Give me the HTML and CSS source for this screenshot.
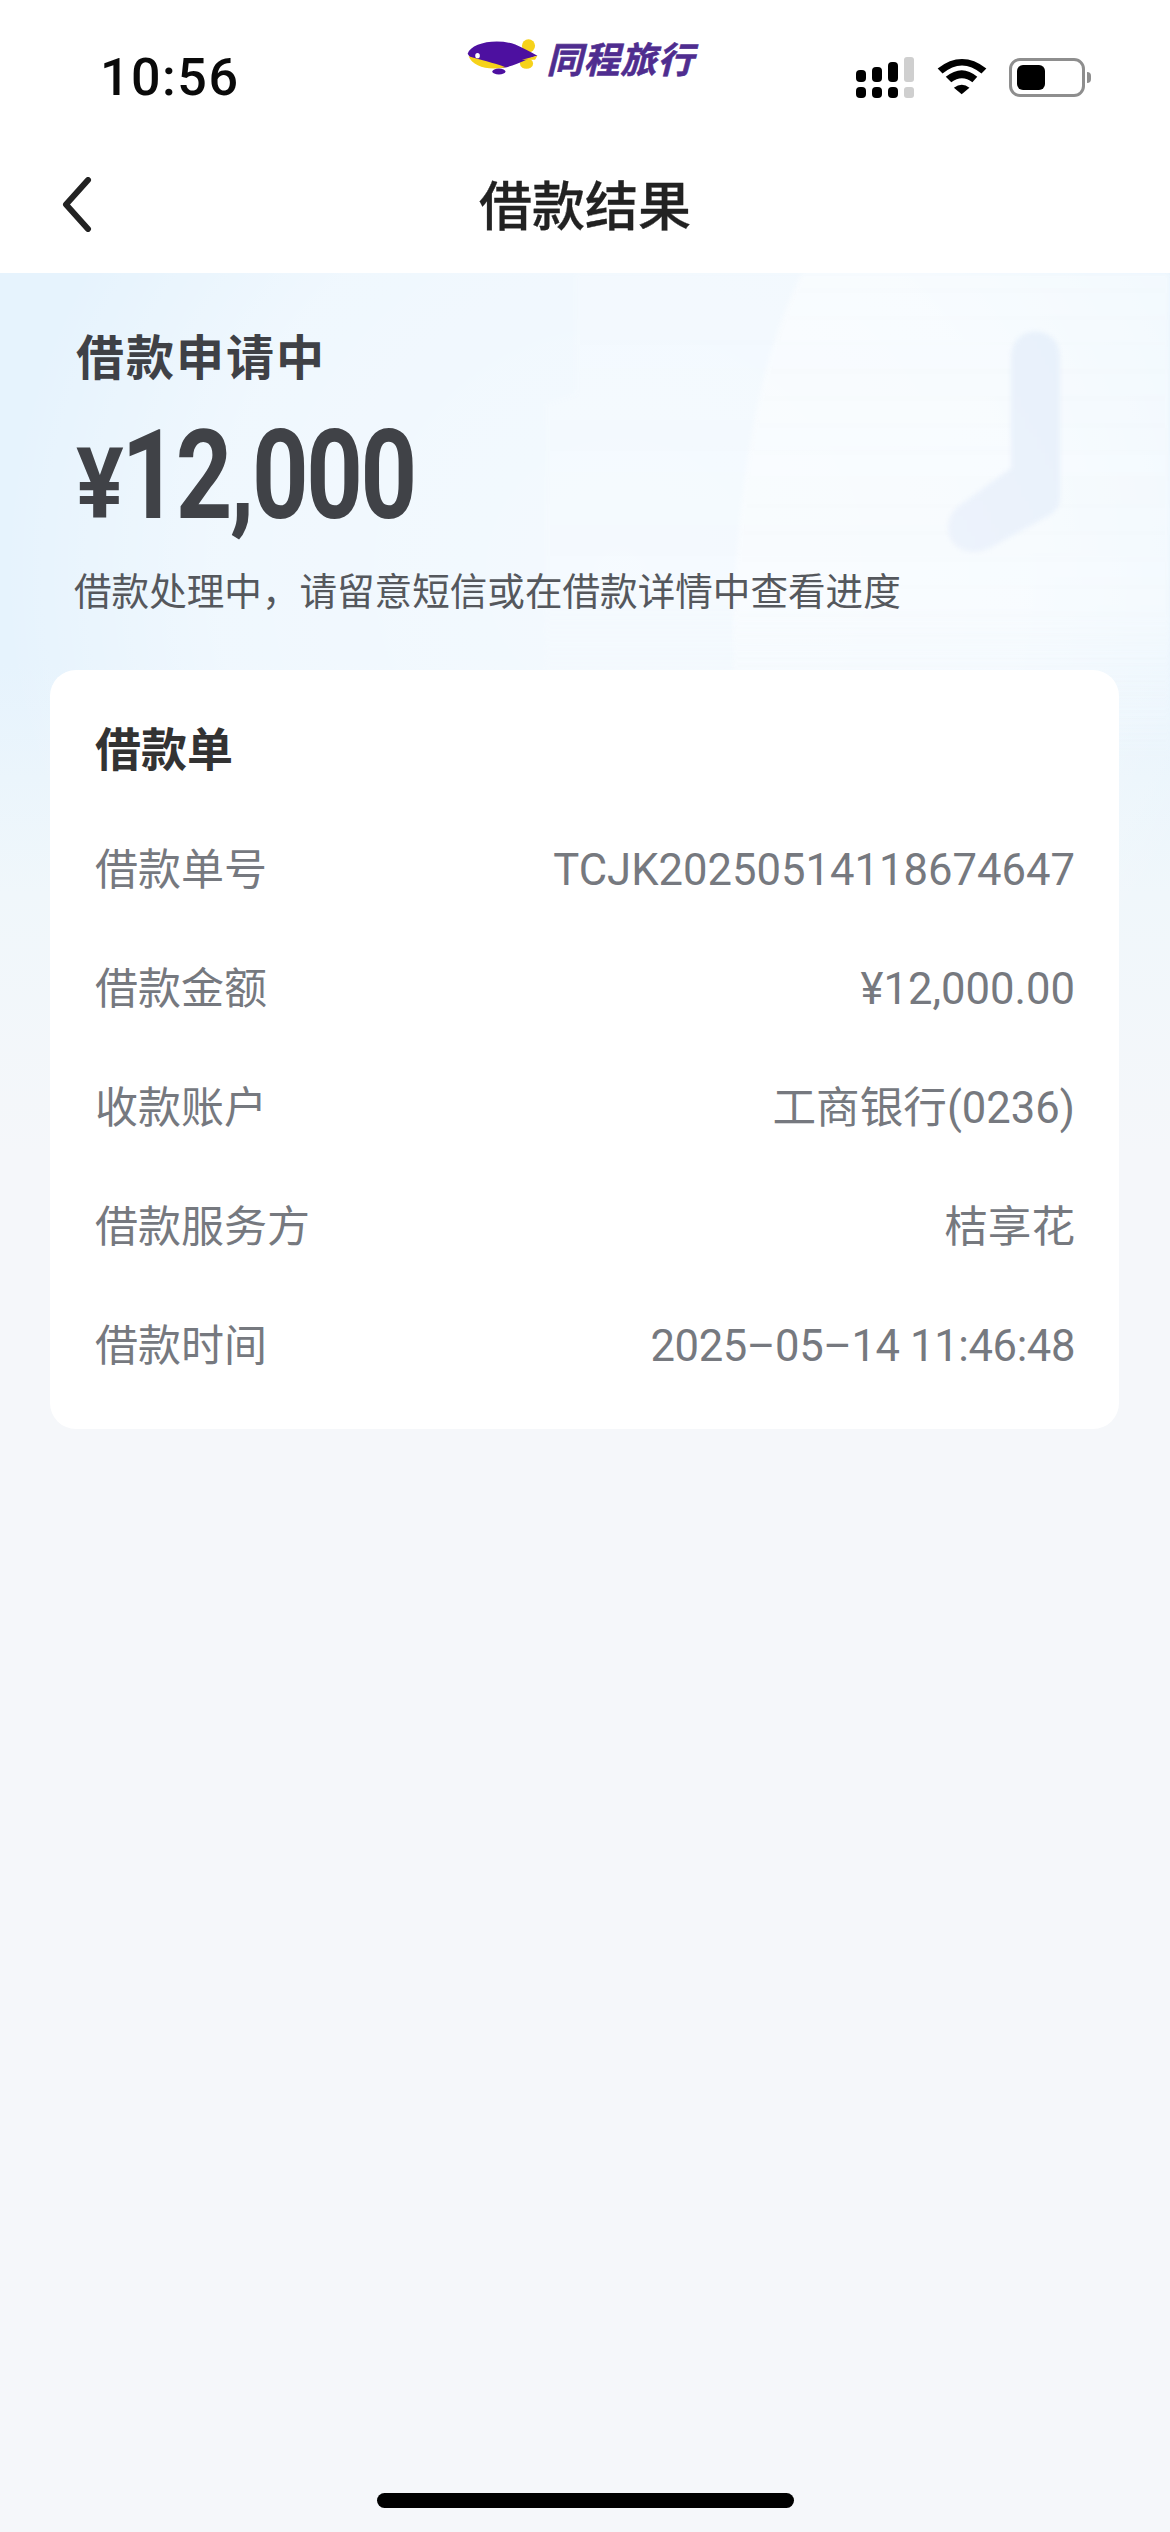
FILE: index.html
```html
<!DOCTYPE html>
<html lang="zh-CN">
<head>
<meta charset="UTF-8">
<meta name="viewport" content="width=device-width, initial-scale=1.0">
<title>借款结果</title>
<link rel="stylesheet" href="styles.css">
</head>
<body>
<div class="page">
    <header class="top">
        <div class="status">
            <span class="time">10:56</span>
            <div class="brand">
                <svg class="brand-mark" viewBox="80 50 225 120" aria-hidden="true">
                    <ellipse cx="270" cy="76" rx="20" ry="20" fill="#f6d21a"/>
                    <ellipse cx="264" cy="130" rx="20" ry="16" fill="#f6d21a"/>
                    <path d="M85 100C95 68 170 52 230 72C255 82 275 95 297 106C265 115 240 132 195 143C140 146 100 128 85 100Z" fill="#4d10a0"/>
                    <path d="M88 108C120 118 165 128 200 141C150 152 100 140 88 108Z" fill="#f6d21a"/>
                    <path d="M297 106L250 118L290 118Z" fill="#f6d21a"/>
                    <ellipse cx="115" cy="106" rx="7" ry="8" fill="#fff"/>
                    <ellipse cx="180" cy="154" rx="20" ry="9" fill="#4d10a0"/>
                </svg>
                <span class="brand-name">同程旅行</span>
            </div>
            <div class="status-icons">
                <svg class="signal" viewBox="0 0 58 41" aria-hidden="true">
                    <rect x="0" y="13" width="10" height="12" rx="4"/>
                    <rect x="16" y="10" width="10" height="15" rx="4"/>
                    <rect x="32" y="5" width="10" height="20" rx="4"/>
                    <rect x="48" y="0" width="10" height="25" rx="3" fill="#cfcfcf"/>
                    <rect x="0" y="30" width="10" height="11" rx="4"/>
                    <rect x="16" y="30" width="10" height="11" rx="4"/>
                    <rect x="32" y="30" width="10" height="11" rx="4"/>
                    <rect x="48" y="30" width="10" height="11" rx="3" fill="#cfcfcf"/>
                </svg>
                <svg class="wifi" viewBox="288 56 154 112" aria-hidden="true">
                    <path d="M290 87Q365 29 440 87L425 103Q365 53 305 103Z"/>
                    <path d="M315 113Q365 72 412 113L397 130Q365 105 332 130Z"/>
                    <path d="M340 147Q365 128 388 147L364 167Z"/>
                </svg>
                <div class="battery">
                    <div class="battery-body"><span class="battery-level"></span></div>
                    <span class="battery-nub"></span>
                </div>
            </div>
        </div>
        <nav class="nav">
            <svg class="back" viewBox="0 0 30 55" aria-hidden="true">
                <path d="M26 3L4 27.5L26 52" fill="none" stroke="#222" stroke-width="6" stroke-linecap="round" stroke-linejoin="round"/>
            </svg>
            <h1 class="title">借款结果</h1>
            <span></span>
        </nav>
    </header>

    <main class="main">
        <div class="backdrop">
            <svg class="backdrop-art" viewBox="0 0 1170 800" aria-hidden="true">
                <defs>
                    <linearGradient id="fadeDown" x1="0" y1="0" x2="0" y2="1">
                        <stop offset="0" stop-color="#fff" stop-opacity="0.55"/>
                        <stop offset="0.7" stop-color="#fff" stop-opacity="0.5"/>
                        <stop offset="1" stop-color="#fff" stop-opacity="0"/>
                    </linearGradient>
                    <radialGradient id="glow" cx="620" cy="300" r="620" gradientUnits="userSpaceOnUse">
                        <stop offset="0" stop-color="#fff" stop-opacity="0.55"/>
                        <stop offset="0.65" stop-color="#fff" stop-opacity="0.4"/>
                        <stop offset="1" stop-color="#fff" stop-opacity="0"/>
                    </radialGradient>
                    <linearGradient id="clockFade" x1="1" y1="0" x2="0" y2="1">
                        <stop offset="0" stop-color="#e8f1fb"/>
                        <stop offset="1" stop-color="#edf3fc"/>
                    </linearGradient>
                </defs>
                <rect class="glow" x="0" y="0" width="1170" height="800" fill="url(#glow)"/>
                <path class="soft" d="M575 0V120L545 130V480H1170V0Z" fill="url(#fadeDown)" opacity="0.25"/>
                <path class="soft" d="M802 0H1170V490H735C725 300 745 110 802 0Z" fill="url(#fadeDown)" opacity="0.8"/>
                <path class="soft" d="M1011 84C1011 50 1060 50 1060 84V225C1060 233 1056 238 1050 242L990 275C970 285 948 275 948 255C948 245 952 238 960 232L1011 195Z" fill="url(#clockFade)"/>
            </svg>
        </div>

        <section class="summary">
            <h2 class="summary-state">借款申请中</h2>
            <p class="summary-amount"><span class="currency">¥</span>12,000</p>
            <p class="summary-note">借款处理中&#xFF0C;请留意短信或在借款详情中查看进度</p>
        </section>

        <section class="card">
            <h3 class="card-title">借款单</h3>
            <div class="row"><span class="cjk">借款单号</span><span class="value">TCJK20250514118674647</span></div>
            <div class="row"><span class="cjk">借款金额</span><span class="value">¥12,000.00</span></div>
            <div class="row"><span class="cjk">收款账户</span><span class="value cjk">工商银行(0236)</span></div>
            <div class="row"><span class="cjk">借款服务方</span><span class="value cjk">桔享花</span></div>
            <div class="row"><span class="cjk">借款时间</span><span class="value value-date">2025–05–14 11:46:48</span></div>
        </section>
    </main>

    <div class="home-bar"></div>
</div>
</body>
</html>
```

FILE: styles.css
```css
* {
    box-sizing: border-box;
}
body {
    margin: 0;
    padding: 0;
    background-color: #f5f7fa;
    font-family: Roboto, "Noto Sans CJK SC", sans-serif;
}
h1, h2, h3, p {
    margin: 0;
}
.page {
    position: relative;
    width: 1170px;
    height: 2532px;
    overflow: hidden;
    display: flex;
    flex-direction: column;
}

/* status bar + nav */
.top {
    height: 273px;
    background-color: #fff;
}
.status {
    height: 130px;
    display: grid;
    grid-template-columns: 1fr auto 1fr;
    padding: 0 79px 0 100px;
}
.time {
    margin-top: 48px;
    font-size: 52px;
    line-height: 60px;
    font-weight: 500;
    letter-spacing: 1.5px;
    color: #0a0a0a;
}
.brand {
    display: flex;
    align-items: center;
    height: 40px;
    margin-top: 37px;
    margin-right: 30px;
    gap: 6px;
}
.brand-mark {
    width: 74px;
    height: 40px;
}
.brand-name {
    font-family: "Noto Sans CJK SC", sans-serif;
    font-size: 36px;
    font-weight: 700;
    line-height: 40px;
    letter-spacing: 1px;
    font-style: italic;
    color: #4f2d8f;
    -webkit-text-stroke: 0.6px #4f2d8f;
}
.status-icons {
    display: flex;
    justify-content: flex-end;
    align-items: flex-start;
    margin-top: 57px;
}
.signal {
    width: 58px;
    height: 41px;
    margin-right: 23px;
}
.wifi {
    width: 50px;
    height: 37px;
    margin-top: 1px;
    margin-right: 22px;
}
.battery {
    display: flex;
    align-items: center;
    margin-top: 1px;
}
.battery-body {
    width: 76px;
    height: 39px;
    padding: 4px 5px;
    border: 3px solid #8e8e8e;
    border-radius: 11px;
}
.battery-level {
    display: block;
    width: 28px;
    height: 100%;
    background-color: #000;
    border-radius: 6px;
}
.battery-nub {
    width: 4px;
    height: 11px;
    margin-left: 2px;
    background-color: #8e8e8e;
    border-radius: 0 4px 4px 0;
}
.nav {
    height: 143px;
    display: grid;
    grid-template-columns: 1fr auto 1fr;
    align-items: center;
    padding: 0 62px 0 62px;
}
.back {
    width: 30px;
    height: 55px;
    margin-top: 6px;
}
.title {
    margin-top: 3px;
    font-family: "Noto Sans CJK SC", sans-serif;
    font-size: 53px;
    line-height: 60px;
    font-weight: 500;
    color: #222;
    -webkit-text-stroke: 0.3px #222;
}

/* hero + card */
.main {
    position: relative;
    flex: 1;
    padding: 51px 51px 0 50px;
}
.backdrop {
    position: absolute;
    top: 0;
    left: 0;
    width: 1170px;
    height: 880px;
    background: linear-gradient(180deg, #e6f3fd 0, #e6f3fd 390px, #f0f7fb 620px, #f5f7fa 880px);
}
.backdrop-art {
    display: block;
    width: 1170px;
    height: 800px;
}
.soft {
    filter: blur(2px);
}
.summary {
    position: relative;
    padding-left: 26px;
}
.summary-state {
    font-family: "Noto Sans CJK SC", sans-serif;
    font-size: 48px;
    line-height: 60px;
    font-weight: 700;
    letter-spacing: 2px;
    color: #3f4146;
}
.summary-amount {
    display: flex;
    align-items: baseline;
    height: 130px;
    margin-top: 27px;
    font-size: 125px;
    line-height: 130px;
    font-weight: 700;
    letter-spacing: -3px;
    color: #404247;
    transform: scaleX(0.79);
    transform-origin: left center;
}
.currency {
    font-size: 98px;
    margin-right: 8px;
    transform: scaleX(1.15);
    transform-origin: left center;
}
.summary-note {
    margin-top: 23px;
    margin-left: -2px;
    font-family: "Noto Sans CJK SC", sans-serif;
    font-size: 37.6px;
    line-height: 50px;
    color: #55585d;
}
.card {
    position: relative;
    margin-top: 56px;
    height: 759px;
    padding: 46px 44px 0 45px;
    background-color: #fff;
    border-radius: 26px;
}
.card-title {
    font-family: "Noto Sans CJK SC", sans-serif;
    font-size: 46px;
    line-height: 60px;
    font-weight: 700;
    color: #333;
    margin-bottom: 35px;
}
.row {
    display: flex;
    justify-content: space-between;
    align-items: center;
    height: 119px;
    font-size: 43px;
    font-family: "Noto Sans CJK SC", sans-serif;
    color: #76797f;
}
.cjk {
    padding-bottom: 9px;
}
.value {
    font-family: Roboto, "Noto Sans CJK SC", sans-serif;
    font-size: 43.6px;
}
.value-date {
    letter-spacing: -0.4px;
}
.home-bar {
    position: absolute;
    left: 377px;
    top: 2493px;
    width: 417px;
    height: 15px;
    background-color: #000;
    border-radius: 8px;
}
```
